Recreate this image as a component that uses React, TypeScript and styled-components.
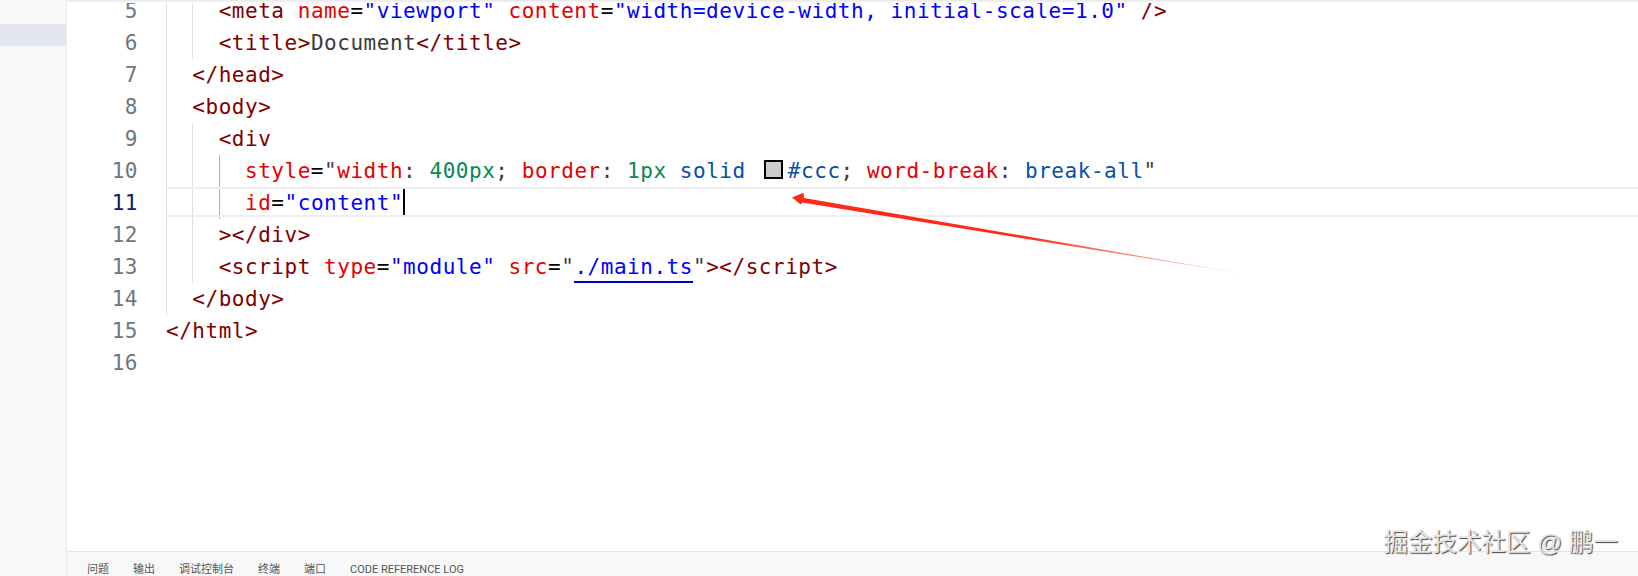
import React from "react";
import styled, { createGlobalStyle } from "styled-components";

const GlobalStyle = createGlobalStyle`
  html, body {
    margin: 0;
    padding: 0;
    background: #fff;
  }
`;

const c = {
  tag: "#800000",
  attr: "#e50000",
  str: "#0000ff",
  text: "#3b3b3b",
  num: "#098658",
  val: "#0451a5",
};

const App = () => {
  return (
    <Page>
      <GlobalStyle />
      <Sidebar>
        <SideItem />
      </Sidebar>
      <Main>
        <Editor>
          <TopShadow />
          <Lines>
            <Row no={5} guides={[0, 0]}>
              <T $c={c.tag}>{"<meta "}</T>
              <T $c={c.attr}>name</T>
              <T $c="#000">=</T>
              <T $c={c.str}>"viewport" </T>
              <T $c={c.attr}>content</T>
              <T $c="#000">=</T>
              <T $c={c.str}>"width=device-width, initial-scale=1.0" </T>
              <T $c={c.tag}>{"/>"}</T>
            </Row>
            <Row no={6} guides={[0, 0]}>
              <T $c={c.tag}>{"<title>"}</T>
              <T $c={c.text}>Document</T>
              <T $c={c.tag}>{"</title>"}</T>
            </Row>
            <Row no={7} guides={[0]}>
              <T $c={c.tag}>{"</head>"}</T>
            </Row>
            <Row no={8} guides={[0]}>
              <T $c={c.tag}>{"<body>"}</T>
            </Row>
            <Row no={9} guides={[0, 0]}>
              <T $c={c.tag}>{"<div"}</T>
            </Row>
            <Row no={10} guides={[0, 0, 1]}>
              <T $c={c.attr}>style</T>
              <T $c="#000">=</T>
              <T $c={c.text}>"</T>
              <T $c={c.attr}>width</T>
              <T $c={c.text}>: </T>
              <T $c={c.num}>400px</T>
              <T $c={c.text}>; </T>
              <T $c={c.attr}>border</T>
              <T $c={c.text}>: </T>
              <T $c={c.num}>1px </T>
              <T $c={c.val}>solid </T>
              <Swatch />
              <T $c={c.val}>#ccc</T>
              <T $c={c.text}>; </T>
              <T $c={c.attr}>word-break</T>
              <T $c={c.text}>: </T>
              <T $c={c.val}>break-all</T>
              <T $c={c.text}>"</T>
            </Row>
            <Row no={11} guides={[0, 0, 1]} active>
              <T $c={c.attr}>id</T>
              <T $c="#000">=</T>
              <T $c={c.str}>"content"</T>
              <Caret />
            </Row>
            <Row no={12} guides={[0, 0]}>
              <T $c={c.tag}>{"></div>"}</T>
            </Row>
            <Row no={13} guides={[0, 0]}>
              <T $c={c.tag}>{"<script "}</T>
              <T $c={c.attr}>type</T>
              <T $c="#000">=</T>
              <T $c={c.str}>"module" </T>
              <T $c={c.attr}>src</T>
              <T $c="#000">=</T>
              <T $c={c.text}>"</T>
              <LinkText>./main.ts</LinkText>
              <T $c={c.text}>"</T>
              <T $c={c.tag}>{"></script>"}</T>
            </Row>
            <Row no={14} guides={[0]}>
              <T $c={c.tag}>{"</body>"}</T>
            </Row>
            <Row no={15} guides={[]}>
              <T $c={c.tag}>{"</html>"}</T>
            </Row>
            <Row no={16} guides={[]} />
          </Lines>
          <Arrow viewBox="0 0 1638 576">
            <defs>
              <linearGradient id="arrowFade" gradientUnits="userSpaceOnUse" x1="1020" y1="235" x2="1250" y2="275">
                <stop offset="0" stopColor="#ff2a1a" />
                <stop offset="1" stopColor="#ff2a1a" stopOpacity="0.1" />
              </linearGradient>
            </defs>
            <polygon
              points="792,197.5 803.5,192.7 804,198 1250,275 802,202.5 800.7,204.5"
              fill="url(#arrowFade)"
            />
          </Arrow>
        </Editor>
        <Panel>
          <PanelTab>问题</PanelTab>
          <PanelTab>输出</PanelTab>
          <PanelTab>调试控制台</PanelTab>
          <PanelTab>终端</PanelTab>
          <PanelTab>端口</PanelTab>
          <PanelTab>CODE REFERENCE LOG</PanelTab>
        </Panel>
      </Main>
      <Watermark>掘金技术社区 @ 鹏一</Watermark>
    </Page>
  );
};

const Row = ({
  no,
  guides,
  active,
  children,
}: {
  no: number;
  guides: number[];
  active?: boolean;
  children?: React.ReactNode;
}) => (
  <RowWrap>
    <LineNo $active={active}>{no}</LineNo>
    <Code $active={active}>
      {guides.map((g, i) => (
        <Guide key={i} $on={g === 1} />
      ))}
      {children}
    </Code>
  </RowWrap>
);

export default App;

const Page = styled.div`
  position: relative;
  display: flex;
  width: 1638px;
  height: 576px;
  overflow: hidden;
  background: #fff;
`;

const Sidebar = styled.div`
  flex: none;
  width: 67px;
  padding-top: 24px;
  box-sizing: border-box;
  background: #f8f8f8;
  border-right: 1px solid #ececec;
`;

const SideItem = styled.div`
  height: 22px;
  background: #e4e6f1;
`;

const Main = styled.div`
  flex: 1;
  display: flex;
  flex-direction: column;
  min-width: 0;
`;

const Editor = styled.div`
  position: relative;
  flex: 1;
  overflow: hidden;
`;

const TopShadow = styled.div`
  position: absolute;
  top: 0;
  left: 0;
  right: 0;
  height: 3px;
  background: linear-gradient(#e6e6e6, #fff);
  z-index: 2;
`;

const Lines = styled.div`
  margin-top: -5px;
  font-family: "DejaVu Sans Mono", monospace;
  font-size: 21px;
  letter-spacing: 0.53px;
`;

const RowWrap = styled.div`
  display: flex;
  height: 32px;
  line-height: 32px;
  white-space: pre;
`;

const LineNo = styled.div<{ $active?: boolean }>`
  flex: none;
  width: 71px;
  padding-right: 28px;
  text-align: right;
  color: ${(p) => (p.$active ? "#0b216f" : "#6e7681")};
`;

const Code = styled.div<{ $active?: boolean }>`
  position: relative;
  flex: 1;
  display: flex;
  &::before {
    content: "";
    display: ${(p) => (p.$active ? "block" : "none")};
    position: absolute;
    top: 0;
    left: 0;
    right: 0;
    height: 26px;
    border-top: 2px solid #eeeeee;
    border-bottom: 2px solid #eeeeee;
  }
`;

const Guide = styled.span<{ $on?: boolean }>`
  flex: none;
  box-sizing: border-box;
  width: 26.34px;
  border-left: 1px solid ${(p) => (p.$on ? "#b0b0b0" : "#e0e0e0")};
`;

const T = styled.span<{ $c: string }>`
  position: relative;
  color: ${(p) => p.$c};
`;

const LinkText = styled.span`
  position: relative;
  color: #0000ff;
  &::after {
    content: "";
    position: absolute;
    left: 0;
    right: 0;
    top: 30px;
    height: 2px;
    background: #0000d0;
  }
`;

const Swatch = styled.span`
  flex: none;
  box-sizing: border-box;
  width: 19px;
  height: 19px;
  margin: 5px 5px 0 5px;
  border: 2px solid #000;
  background: #cccccc;
`;

const Caret = styled.span`
  flex: none;
  width: 2px;
  height: 30px;
  background: #000;
`;

const Arrow = styled.svg`
  position: absolute;
  top: 0;
  left: -67px;
  width: 1638px;
  height: 576px;
  pointer-events: none;
`;

const Panel = styled.div`
  flex: none;
  box-sizing: border-box;
  height: 25px;
  display: flex;
  align-items: flex-start;
  gap: 24px;
  padding: 12px 0 0 20px;
  background: #f8f8f8;
  border-top: 1px solid #e5e5e5;
`;

const PanelTab = styled.span`
  font-family: Roboto, "Noto Sans CJK SC", sans-serif;
  font-size: 11px;
  line-height: 12px;
  color: #555;
  white-space: nowrap;
`;

const Watermark = styled.div`
  position: absolute;
  right: 20px;
  top: 528px;
  font-family: "Liberation Sans", "Noto Sans CJK SC", sans-serif;
  font-size: 24.5px;
  line-height: 30px;
  color: #e6e6e6;
  text-shadow: 1px 1px 1px #444;
  white-space: nowrap;
`;
